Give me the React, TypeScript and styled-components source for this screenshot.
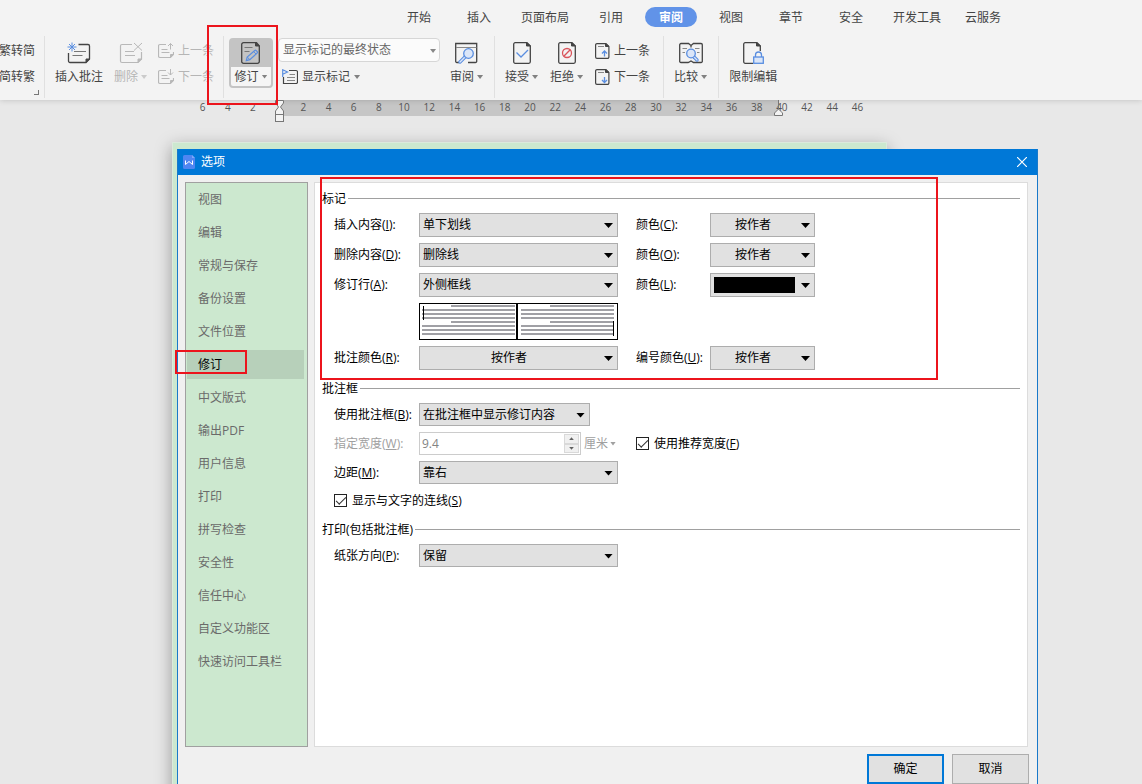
import React, { useState } from 'react';
import styled, { createGlobalStyle, css } from 'styled-components';

const GlobalStyle = createGlobalStyle`
  *, *::before, *::after { box-sizing: border-box; }
  html, body { margin: 0; padding: 0; }
  body, button, input, select {
    font-family: "Open Sans", "Noto Sans CJK SC", sans-serif;
    font-size: 12px;
    line-height: 16px;
  }
  button, input, select { margin: 0; }
  button { padding: 0; border: 0; background: none; color: inherit; }
`;

const Screen = styled.div`
  position: relative;
  display: flex;
  flex-direction: column;
  height: 100vh;
  overflow: hidden;
  background: #e8e8e8;
`;

/* ---------- Ribbon ---------- */

const Ribbon = styled.header`
  flex: none;
  position: relative;
  z-index: 1;
  background: #f3f3f3;
  box-shadow: 0 0 6px rgba(0, 0, 0, 0.18);
  color: #444;
  white-space: nowrap;
`;

const TabBar = styled.nav`
  display: flex;
  align-items: center;
  height: 34px;
  padding-left: 389px;
`;

const Tab = styled.button<{ $active?: boolean }>`
  display: flex;
  justify-content: center;
  min-width: 60px;
  padding: 0 ${p => (p.$active ? 4 : 12)}px;
  color: ${p => (p.$active ? '#fff' : '#444')};
  font-weight: ${p => (p.$active ? 700 : 400)};
`;

const TabLabel = styled.span<{ $active?: boolean }>`
  padding: 3px 0 1px;
  ${p =>
    p.$active &&
    css`
      flex: 1;
      border-radius: 10px;
      background: #6193e8;
    `}
`;

const Tools = styled.div`
  display: flex;
  height: 66px;
  padding: 2px 0;
`;

const Group = styled.div<{ $left?: number; $right?: number; $gap?: number; $last?: boolean }>`
  display: flex;
  align-items: flex-start;
  gap: ${p => p.$gap ?? 0}px;
  padding: 2px ${p => p.$right ?? 11}px 0 ${p => p.$left ?? 10}px;
  border-right: ${p => (p.$last ? 0 : 1)}px solid #e0e0e0;
`;

const BigButton = styled.button`
  display: flex;
  flex-direction: column;
  align-items: center;
  gap: 5px;
  padding-top: 4px;

  &:disabled { color: #b5b5b5; }
`;

const TrackButton = styled(BigButton)`
  width: 44px;
  height: 50px;
  gap: 3px;
  padding: 4px 2px 2px;
  border-radius: 4px;
  background: #c4c4c4;
`;

const TrackLabel = styled.span`
  display: flex;
  align-items: center;
  justify-content: center;
  width: 100%;
  height: 19px;
  border-radius: 0 0 2px 2px;
  background: #f5f5f5;
`;

const Stack = styled.div<{ $top?: number; $gap?: number; $width?: number }>`
  display: flex;
  flex-direction: column;
  align-items: flex-start;
  gap: ${p => p.$gap ?? 10}px;
  width: ${p => (p.$width ? `${p.$width}px` : 'auto')};
  padding-top: ${p => p.$top ?? 5}px;
`;

const SmallButton = styled.button<{ $indent?: number }>`
  display: flex;
  align-items: center;
  gap: 4px;
  height: 16px;
  padding-left: ${p => p.$indent ?? 0}px;

  &:disabled { color: #b5b5b5; }
`;

const Label = styled.span`
  display: flex;
  align-items: center;
  gap: 3px;
`;

const Caret = styled.i`
  width: 6px;
  height: 4px;
  background: currentColor;
  opacity: 0.65;
  clip-path: polygon(0 0, 100% 0, 50% 100%);
`;

const CornerGroup = styled(Group)`
  flex-direction: column;
  align-items: flex-end;
  justify-content: space-between;
  width: 45px;
  padding-bottom: 3px;
`;

const Launcher = styled.button`
  width: 5px;
  height: 5px;
  margin-right: -4px;
  border-right: 1px solid #777;
  border-bottom: 1px solid #777;
`;

/* ---------- Ruler ---------- */

const Ruler = styled.div`
  flex: none;
  position: relative;
  height: 16px;
  background: linear-gradient(#c6c6c6, #c6c6c6) 279px 0 / 499px 100% no-repeat;
`;

const Ticks = styled.div`
  display: grid;
  grid-template-columns: repeat(27, 1fr);
  width: 680px;
  margin-left: 190px;
  color: #555;
  font-size: 10px;
  line-height: 15px;
  text-align: center;
`;

const Marker = styled.svg<{ $x: number; $y: number }>`
  position: absolute;
  z-index: 2;
  left: ${p => p.$x}px;
  top: ${p => p.$y}px;
`;

/* ---------- Workspace and windows ---------- */

const Workspace = styled.main`
  flex: 1;
  position: relative;
`;

const Sheet = styled.div`
  position: absolute;
  top: 26px;
  right: 255px;
  bottom: -20px;
  left: 172px;
  border: 1px solid #dbeadd;
  background: #cce8cf;
  box-shadow: 0 5px 16px rgba(0, 0, 0, 0.35);
`;

const Dialog = styled.section`
  position: absolute;
  top: 33px;
  right: 104px;
  left: 177px;
  border: 1px solid #1979ca;
  border-top: 0;
  background: #f0f0f0;
  color: #000;
`;

const TitleBar = styled.header`
  display: flex;
  align-items: center;
  gap: 6px;
  height: 26px;
  padding: 0 10px 0 5px;
  background: #0078d7;
  color: #fff;
`;

const Title = styled.h1`
  flex: 1;
  margin: 0;
  font-size: 12px;
  font-weight: 400;
`;

const CloseButton = styled.button`
  display: flex;
`;

const Body = styled.div`
  display: flex;
  gap: 6px;
  min-height: 572px;
  padding: 7px 9px 0 7px;
`;

const Sidebar = styled.nav`
  display: flex;
  flex-direction: column;
  gap: 4px;
  width: 123px;
  padding: 2px 3px 2px 1px;
  border: 1px solid #a0a0a0;
  background: #cce8cf;
`;

const SidebarItem = styled.button<{ $active?: boolean }>`
  height: 29px;
  padding-left: 11px;
  background: ${p => (p.$active ? '#b7d0ba' : 'transparent')};
  color: ${p => (p.$active ? '#000' : '#6a6a6a')};
  text-align: left;
`;

const Panel = styled.div`
  flex: 1;
  display: flex;
  flex-direction: column;
  gap: 10px;
  padding: 7px;
  border: 1px solid #dcdcdc;
  background: #fff;
`;

const Section = styled.section`
  display: flex;
  flex-direction: column;
  gap: 6px;
`;

const SectionTitle = styled.h2`
  display: flex;
  align-items: center;
  gap: 2px;
  height: 17px;
  margin: 0;
  font-size: 12px;
  font-weight: 400;

  &::after {
    content: "";
    flex: 1;
    height: 1px;
    background: #a0a0a0;
  }
`;

const Fields = styled.div<{ $rows: string }>`
  display: grid;
  grid-template-columns: 85px 217px 74px 105px;
  grid-template-rows: ${p => p.$rows};
  gap: 6px 0;
  align-items: center;
  padding-left: 12px;
`;

const FieldLabel = styled.label<{ $first?: boolean; $disabled?: boolean }>`
  grid-column: ${p => (p.$first ? 1 : 'auto')};
  color: ${p => (p.$disabled ? '#a0a0a0' : '#000')};
  white-space: nowrap;
`;

const SelectBox = styled.div<{ $width: number }>`
  position: relative;
  align-self: stretch;
  display: flex;
  width: ${p => p.$width}px;

  &::after {
    content: "";
    position: absolute;
    top: calc(50% - 2px);
    right: 5px;
    width: 9px;
    height: 5px;
    background: #000;
    clip-path: polygon(0 0, 100% 0, 50% 100%);
    pointer-events: none;
  }
`;

const Select = styled.select<{ $center?: boolean; $swatch?: string }>`
  appearance: none;
  width: 100%;
  padding: ${p => (p.$swatch ? '3px 19px 3px 3px' : p.$center ? '0 19px 0 0' : '0 17px 0 3px')};
  border: 1px solid #adadad;
  border-radius: 0;
  outline: 0;
  background: ${p =>
    p.$swatch ? `linear-gradient(${p.$swatch}, ${p.$swatch}) content-box, #e1e1e1` : '#e1e1e1'};
  color: #000;
  text-align-last: ${p => (p.$center ? 'center' : 'left')};
`;

const ViewBox = styled(SelectBox)`
  height: 24px;

  &::after {
    top: 11px;
    right: 4px;
    width: 6px;
    height: 4px;
    background: #888;
  }
`;

const ViewSelect = styled(Select)`
  padding: 0 17px 0 4px;
  border-color: #d6d6d6;
  border-radius: 4px;
  background: #fbfbfb;
  color: #666;
`;

const PreviewArt = styled.svg`
  grid-column: 2;
  display: block;
`;

const WidthField = styled.div`
  display: flex;
  align-self: stretch;
  align-items: center;
  color: #a0a0a0;
`;

const NumberFrame = styled.div`
  display: flex;
  align-self: stretch;
  width: 162px;
  padding: 1px;
  border: 1px solid #ccc;
  background: #fff;
`;

const NumberInput = styled.input`
  flex: 1;
  min-width: 0;
  padding: 0 1px;
  border: 0;
  background: transparent;
  color: #838383;
`;

const Spinner = styled.div`
  display: flex;
  flex-direction: column;
  width: 15px;
  background: #f0f0f0;
`;

const SpinButton = styled.button<{ $up?: boolean }>`
  flex: 1;
  display: flex;
  align-items: center;
  justify-content: center;
  border: 1px solid #d9d9d9;

  &::before {
    content: "";
    width: 5px;
    height: 3px;
    background: #606060;
    clip-path: ${p =>
      p.$up ? 'polygon(50% 0, 100% 100%, 0 100%)' : 'polygon(0 0, 100% 0, 50% 100%)'};
  }
`;

const UnitBox = styled(SelectBox)`
  margin-left: 3px;

  &::after {
    right: 0;
    width: 6px;
    height: 4px;
    background: #a0a0a0;
  }
`;

const UnitSelect = styled(Select)`
  padding: 0;
  border: 0;
  background: transparent;

  &:disabled { color: #a0a0a0; opacity: 1; }
`;

const CheckLabel = styled.label<{ $column: string }>`
  grid-column: ${p => p.$column};
  display: flex;
  align-items: center;
  gap: 5px;
  white-space: nowrap;
`;

const Checkbox = styled.input`
  appearance: none;
  display: flex;
  align-items: center;
  justify-content: center;
  width: 13px;
  height: 13px;
  margin: 0;
  border: 1px solid #222;
  background: #fff;

  &:checked::before {
    content: "";
    width: 10px;
    height: 5px;
    margin-bottom: 3px;
    border: solid #333;
    border-width: 0 0 1px 1px;
    transform: rotate(-45deg);
  }
`;

const Footer = styled.footer`
  display: flex;
  justify-content: flex-end;
  gap: 8px;
  padding: 7px 8px 8px;
`;

const DialogButton = styled.button<{ $primary?: boolean }>`
  width: 77px;
  height: 30px;
  border: ${p => (p.$primary ? '2px solid #0078d7' : '1px solid #adadad')};
  background: #e1e1e1;
`;

const Highlight = styled.div<{ $x: number; $y: number; $w: number; $h: number }>`
  position: absolute;
  z-index: 3;
  left: ${p => p.$x}px;
  top: ${p => p.$y}px;
  width: ${p => p.$w}px;
  height: ${p => p.$h}px;
  border: 2px solid #ec141c;
  pointer-events: none;
`;

/* ---------- Icons ---------- */

const INK = '#444';
const BLUE = '#5a8ee0';
const TINT = '#dbe6f8';
const PALE = '#b8b8b8';

const IconInsertComment = () => (
  <svg width="24" height="22" fill="none" stroke={INK}>
    <path d="M11.5 2.5H21a1.5 1.5 0 0 1 1.5 1.5v13l-3.5 3.5H3A1.5 1.5 0 0 1 1.5 19V11" strokeWidth="1.3" />
    <path d="M19 20.5v-3.5h3.5z" fill={INK} />
    <path d="M7 9.5h12M5.5 13.5h10" stroke="#777" />
    <path d="M5 .5v9M.5 5h9M2 2l6 6M8 2L2 8" stroke={BLUE} />
  </svg>
);

const IconDeleteComment = () => (
  <svg width="24" height="22" fill="none" stroke={PALE}>
    <path d="M13 2.5H3A1.5 1.5 0 0 0 1.5 4v15A1.5 1.5 0 0 0 3 20.5h16l3.5-3.5V10" strokeWidth="1.2" />
    <path d="M19 20.5v-3.5h3.5z" fill={PALE} />
    <path d="M6 9.5h9M6 13.5h10M15 1l8 7.5M23 1l-8 7.5" />
  </svg>
);

const IconCommentStep = ({ down }: { down?: boolean }) => (
  <svg width="16" height="16" fill="none" stroke={PALE}>
    <path d="M8 1.5H2A1.5 1.5 0 0 0 .5 3v10A1.5 1.5 0 0 0 2 14.5h10.5l3-3V9" strokeWidth="1.2" />
    <path d="M12.5 14.5v-3h3z" fill={PALE} />
    <path d="M3.5 6.5h6M3.5 9.5h8" />
    <path d={down ? 'M12.5 0v6M10 3.5l2.5 2.5L15 3.5' : 'M12.5 6.5V.5M10 3L12.5.5 15 3'} />
  </svg>
);

const IconTrack = () => (
  <svg width="20" height="22" fill="none" stroke={INK}>
    <path d="M15.5.7H2.5A1.8 1.8 0 0 0 .7 2.5v17A1.8 1.8 0 0 0 2.5 21.300h14a1.8 1.8 0 0 0 1.800-1.800V4z" strokeWidth="1.3" />
    <path d="M14.5.5V4h4z" fill={INK} />
    <path d="M3.500 5.500h8M3.500 9.500h5" stroke="#777" />
    <path d="M5.300 18.700l.9-3.700 7.600-6.500a1 1 0 0 1 1.400.1l1 1.100a1 1 0 0 1-.1 1.400L8.800 17.700z" fill="#c4c4c4" stroke={BLUE} strokeWidth="1.200" />
    <path d="M12.700 9.500l2.300 2.600M6.300 15l2.500 2.700" stroke={BLUE} />
  </svg>
);

const IconShowMarkup = () => (
  <svg width="16" height="16" fill="none" stroke={INK}>
    <path d="M7 1.5h7A1.5 1.5 0 0 1 15.500 3v10a1.5 1.5 0 0 1-1.5 1.5H1.500V8" strokeWidth="1.2" />
    <path d="M7.500 5.500H13M5 8.500h8M5 11.500h8" stroke="#888" />
    <path d="M.7 8V.8L5.5 3 .7 5.2" stroke={BLUE} strokeWidth="1.2" />
  </svg>
);

const IconReview = () => (
  <svg width="23" height="22" fill="none" stroke={INK}>
    <path d="M4 20.5H2A1.200 1.200 0 0 1 .7 19V1.500h21V19a1.300 1.300 0 0 1-1.300 1.500H13" strokeWidth="1.3" />
    <path d="M1 5.500h20.500" stroke="#888" />
    <path d="M10.500 14.500L5 20" stroke={BLUE} strokeWidth="3.400" strokeLinecap="round" />
    <path d="M10.500 14.500L5 20" stroke={TINT} strokeWidth="1.400" strokeLinecap="round" />
    <circle cx="13.500" cy="11.500" r="4.800" fill={TINT} stroke={BLUE} strokeWidth="1.300" />
  </svg>
);

const Doc = () => (
  <>
    <path d="M14 .7H2.200A1.500 1.500 0 0 0 .7 2.200v17.600A1.500 1.500 0 0 0 2.200 21.300h13.600a1.500 1.500 0 0 0 1.500-1.500V4z" strokeWidth="1.3" />
    <path d="M13.500.5V4h4z" fill={INK} />
  </>
);

const IconAccept = () => (
  <svg width="18" height="22" fill="none" stroke={INK}>
    <Doc />
    <path d="M3.500 10.500l4.500 4.500 7-7" stroke={BLUE} strokeWidth="1.3" />
  </svg>
);

const IconReject = () => (
  <svg width="18" height="22" fill="none" stroke={INK}>
    <Doc />
    <g stroke="#d9535a" strokeWidth="1.3">
      <circle cx="9" cy="11" r="4.5" />
      <path d="M5.800 14.200l6.400-6.400" />
    </g>
  </svg>
);

const IconChangeStep = ({ down }: { down?: boolean }) => (
  <svg width="15" height="16" fill="none" stroke={INK}>
    <path d="M11 .6H2A1.400 1.400 0 0 0 .6 2v12A1.400 1.400 0 0 0 2 15.400h10.500a1.400 1.400 0 0 0 1.400-1.400V3.500z" strokeWidth="1.2" />
    <path d="M10.500.5v3H14z" fill={INK} />
    <path d="M3 3.500h6" stroke="#888" />
    <path d={down ? 'M9.5 8v5.5M7 11l2.5 2.5L12 11' : 'M9.5 13.5V8M7 10.5L9.5 8l2.5 2.5'} stroke={BLUE} strokeWidth="1.3" />
  </svg>
);

const IconCompare = () => (
  <svg width="24" height="22" fill="none" stroke={INK}>
    <path d="M9.500 20.500H2A1.300 1.300 0 0 1 .7 19V2.800A1.300 1.300 0 0 1 2 1.500h7.500L12 3.500l2.500-2H22a1.300 1.300 0 0 1 1.300 1.300V19a1.300 1.300 0 0 1-1.300 1.500h-7.500L12 19l-2.500 1.500M12 3.500v2" strokeWidth="1.3" />
    <path d="M3.500 6.500H8M3.500 10.500H6M16 6.500h4.500M18 10.500h2.500" stroke="#888" />
    <path d="M15 15l3 3" stroke={BLUE} strokeWidth="3.400" strokeLinecap="round" />
    <path d="M15 15l3 3" stroke={TINT} strokeWidth="1.200" strokeLinecap="round" />
    <circle cx="12" cy="11.500" r="4.300" fill={TINT} stroke={BLUE} strokeWidth="1.300" />
  </svg>
);

const IconRestrict = () => (
  <svg width="21" height="22" fill="none" stroke={INK}>
    <path d="M10 21.300H2.200A1.500 1.500 0 0 1 .7 19.800V2.200A1.500 1.500 0 0 1 2.200.7H14l3.300 3.300V9" strokeWidth="1.3" />
    <path d="M13.500.5V4h4z" fill={INK} />
    <g stroke={BLUE} strokeWidth="1.3">
      <path d="M12.500 15v-2a3 3 0 0 1 6 0V15" />
      <rect x="10.700" y="15" width="9.600" height="6.300" fill={TINT} />
    </g>
  </svg>
);

const Logo = () => (
  <svg width="12" height="14" fill="none">
    <path d="M1.500 0H9l3 3v9.500a1.500 1.500 0 0 1-1.500 1.500h-9A1.500 1.500 0 0 1 0 12.500v-11A1.500 1.500 0 0 1 1.500 0z" fill="#4f86f2" />
    <path d="M9 0l3 3H9z" fill="#7fa9f7" />
    <path d="M2.500 5.500v4l3.500-3 3.500 3v-4" stroke="#fff" />
  </svg>
);

const Preview = () => (
  <PreviewArt width="199" height="37" role="img" aria-label="外侧框线">
    <rect x="0.5" y="0.5" width="198" height="36" fill="#fff" stroke="#000" />
    <rect x="97" width="2" height="37" fill="#000" />
    {[0, 1, 2, 3, 4, 5, 6, 7].map(i => {
      const indent = i % 4 === 0 ? 29 : 0;
      const y = 2 + i * 4;
      return (
        <g key={i} fill="#a0a0a5">
          <rect x={3 + indent} y={y} width={93 - indent} height="2" />
          <rect x={102 + indent} y={y} width={93 - indent} height="2" />
        </g>
      );
    })}
    <rect x="4" y="3" width="1" height="14" fill="#000" />
    <rect x="194" y="18" width="1" height="15" fill="#000" />
  </PreviewArt>
);

/* ---------- Parts ---------- */

const tabs = ['开始', '插入', '页面布局', '引用', '审阅', '视图', '章节', '安全', '开发工具', '云服务'];

const categories = [
  '视图', '编辑', '常规与保存', '备份设置', '文件位置', '修订', '中文版式', '输出PDF',
  '用户信息', '打印', '拼写检查', '安全性', '信任中心', '自定义功能区', '快速访问工具栏',
];

const ticks: (number | null)[] = [6, 4, 2, null, ...Array.from({ length: 23 }, (_, i) => (i + 1) * 2)];

interface FieldProps {
  id: string;
  label: string;
  hotkey: string;
  value: string;
  width: number;
  first?: boolean;
  center?: boolean;
  swatch?: string;
}

function Field({ id, label, hotkey, value, width, first, center, swatch }: FieldProps) {
  return (
    <>
      <FieldLabel $first={first} htmlFor={id}>{label}(<u>{hotkey}</u>):</FieldLabel>
      <SelectBox $width={width}>
        <Select id={id} $center={center} $swatch={swatch}>
          <option>{value}</option>
        </Select>
      </SelectBox>
    </>
  );
}

function RibbonBar() {
  return (
    <Ribbon>
      <TabBar>
        {tabs.map(t => (
          <Tab key={t} $active={t === '审阅'}>
            <TabLabel $active={t === '审阅'}>{t}</TabLabel>
          </Tab>
        ))}
      </TabBar>
      <Tools>
        <CornerGroup $left={0} $right={9}>
          <Stack>
            <SmallButton>繁转简</SmallButton>
            <SmallButton>简转繁</SmallButton>
          </Stack>
          <Launcher aria-label="更多" />
        </CornerGroup>
        <Group $right={9} $gap={11}>
          <BigButton><IconInsertComment /><Label>插入批注</Label></BigButton>
          <BigButton disabled><IconDeleteComment /><Label>删除<Caret /></Label></BigButton>
          <Stack>
            <SmallButton disabled><IconCommentStep />上一条</SmallButton>
            <SmallButton disabled><IconCommentStep down />下一条</SmallButton>
          </Stack>
        </Group>
        <Group $left={5} $gap={5}>
          <TrackButton>
            <IconTrack />
            <TrackLabel><Label>修订<Caret /></Label></TrackLabel>
          </TrackButton>
          <Stack $top={0} $gap={7} $width={167}>
            <ViewBox $width={162}>
              <ViewSelect aria-label="显示状态"><option>显示标记的最终状态</option></ViewSelect>
            </ViewBox>
            <SmallButton $indent={4}><IconShowMarkup />显示标记<Caret /></SmallButton>
          </Stack>
          <BigButton><IconReview /><Label>审阅<Caret /></Label></BigButton>
        </Group>
        <Group $right={13} $gap={12}>
          <BigButton><IconAccept /><Label>接受<Caret /></Label></BigButton>
          <BigButton><IconReject /><Label>拒绝<Caret /></Label></BigButton>
          <Stack>
            <SmallButton><IconChangeStep />上一条</SmallButton>
            <SmallButton><IconChangeStep down />下一条</SmallButton>
          </Stack>
        </Group>
        <Group>
          <BigButton><IconCompare /><Label>比较<Caret /></Label></BigButton>
        </Group>
        <Group $last>
          <BigButton><IconRestrict /><Label>限制编辑</Label></BigButton>
        </Group>
      </Tools>
    </Ribbon>
  );
}

function OptionsDialog() {
  const [current, setCurrent] = useState('修订');
  return (
    <Dialog role="dialog" aria-labelledby="dialog-title">
      <TitleBar>
        <Logo />
        <Title id="dialog-title">选项</Title>
        <CloseButton aria-label="关闭">
          <svg width="10" height="10" stroke="#fff" strokeWidth="1.2">
            <path d="M0 0l10 10M10 0L0 10" />
          </svg>
        </CloseButton>
      </TitleBar>
      <Body>
        <Sidebar>
          {categories.map(c => (
            <SidebarItem key={c} $active={c === current} onClick={() => setCurrent(c)}>{c}</SidebarItem>
          ))}
        </Sidebar>
        <Panel>
          <Section>
            <SectionTitle>标记</SectionTitle>
            <Fields $rows="24px 24px 24px auto 24px">
              <Field first id="insert" label="插入内容" hotkey="I" value="单下划线" width={199} />
              <Field id="insert-color" label="颜色" hotkey="C" value="按作者" width={105} center />
              <Field first id="delete" label="删除内容" hotkey="D" value="删除线" width={199} />
              <Field id="delete-color" label="颜色" hotkey="O" value="按作者" width={105} center />
              <Field first id="line" label="修订行" hotkey="A" value="外侧框线" width={199} />
              <Field id="line-color" label="颜色" hotkey="L" value="" width={105} swatch="#000" />
              <Preview />
              <Field first id="comment-color" label="批注颜色" hotkey="R" value="按作者" width={199} center />
              <Field id="number-color" label="编号颜色" hotkey="U" value="按作者" width={105} center />
            </Fields>
          </Section>
          <Section>
            <SectionTitle>批注框</SectionTitle>
            <Fields $rows="23px 23px 23px 21px">
              <Field first id="balloon" label="使用批注框" hotkey="B" value="在批注框中显示修订内容" width={171} />
              <FieldLabel $first $disabled htmlFor="balloon-width">指定宽度(<u>W</u>):</FieldLabel>
              <WidthField>
                <NumberFrame>
                  <NumberInput id="balloon-width" disabled defaultValue="9.4" />
                  <Spinner>
                    <SpinButton $up disabled aria-label="增加" />
                    <SpinButton disabled aria-label="减少" />
                  </Spinner>
                </NumberFrame>
                <UnitBox $width={32}>
                  <UnitSelect disabled aria-label="单位"><option>厘米</option></UnitSelect>
                </UnitBox>
              </WidthField>
              <CheckLabel $column="3 / 5">
                <Checkbox type="checkbox" defaultChecked />
                <span>使用推荐宽度(<u>F</u>)</span>
              </CheckLabel>
              <Field first id="margin" label="边距" hotkey="M" value="靠右" width={199} />
              <CheckLabel $column="1 / 3">
                <Checkbox type="checkbox" defaultChecked />
                <span>显示与文字的连线(<u>S</u>)</span>
              </CheckLabel>
            </Fields>
          </Section>
          <Section>
            <SectionTitle>打印(包括批注框)</SectionTitle>
            <Fields $rows="23px">
              <Field first id="paper" label="纸张方向" hotkey="P" value="保留" width={199} />
            </Fields>
          </Section>
        </Panel>
      </Body>
      <Footer>
        <DialogButton $primary>确定</DialogButton>
        <DialogButton>取消</DialogButton>
      </Footer>
    </Dialog>
  );
}

export default function App() {
  return (
    <Screen>
      <GlobalStyle />
      <RibbonBar />
      <Ruler>
        <Ticks>{ticks.map((t, i) => <span key={i}>{t}</span>)}</Ticks>
        <Marker $x={275} $y={0} width="9" height="22" fill="#f3f3f3" stroke="#777">
          <path d="M.5.5h8V3l-3 4 3 4v3.500h-8V11l3-4-3-4z" />
          <rect x="0.5" y="14.5" width="8" height="7" />
        </Marker>
        <Marker $x={774} $y={0} width="9" height="16" fill="#f3f3f3" stroke="#777">
          <path d="M4.500 0v10" />
          <path d="M.5 15.500V13l4-4 4 4v2.500z" />
        </Marker>
      </Ruler>
      <Workspace>
        <Sheet />
        <OptionsDialog />
      </Workspace>
      <Highlight $x={207} $y={25} $w={71} $h={80} />
      <Highlight $x={175} $y={350} $w={72} $h={24} />
      <Highlight $x={320} $y={177} $w={618} $h={203} />
    </Screen>
  );
}
